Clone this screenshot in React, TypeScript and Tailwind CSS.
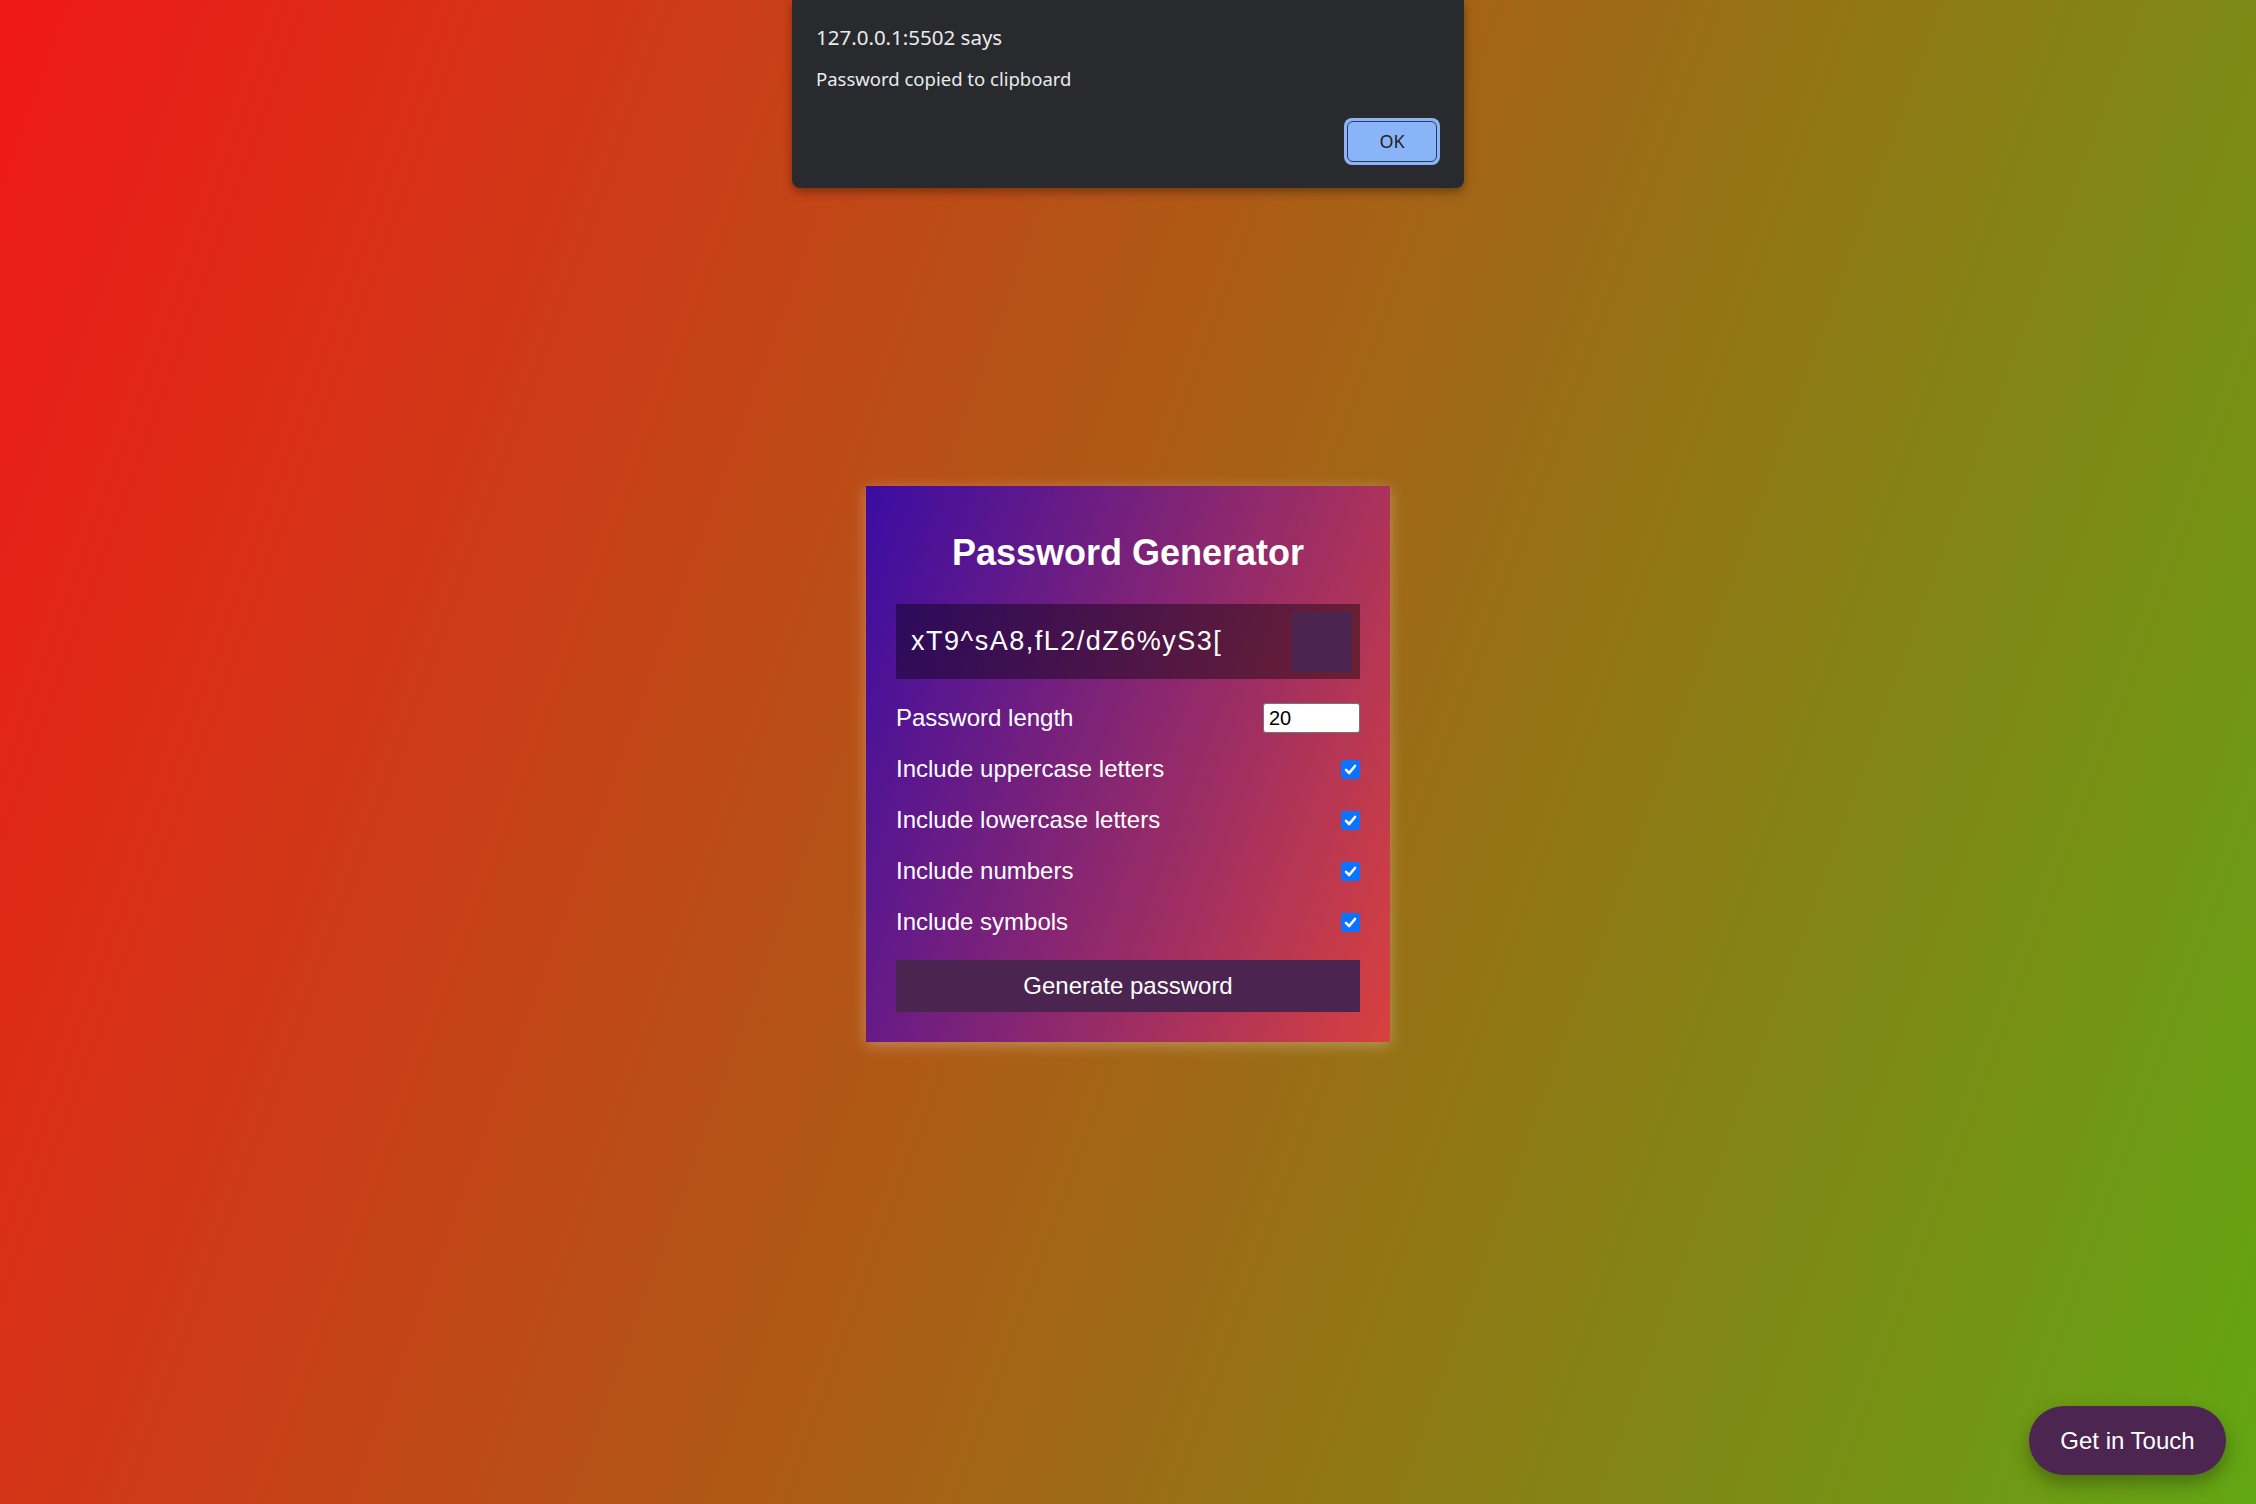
import React from 'react'

const options = [
  'Include uppercase letters',
  'Include lowercase letters',
  'Include numbers',
  'Include symbols',
]

const Check: React.FC = () => (
  <span className="flex h-[19px] w-[19px] items-center justify-center rounded-[3px] bg-[#0b73ff]">
    <svg width="13" height="13" viewBox="0 0 13 13" fill="none">
      <path d="M2 6.8 L5.2 10 L11 3" stroke="#fff" strokeWidth="2.6" strokeLinecap="round" strokeLinejoin="round" />
    </svg>
  </span>
)

const App: React.FC = () => {
  return (
    <div className="relative h-screen w-full overflow-hidden bg-[linear-gradient(110deg,#f01818,#62a614)] font-['Liberation_Sans',Arial,sans-serif]">
      {/* browser alert */}
      <div className="absolute left-1/2 top-0 z-10 w-[672px] -translate-x-1/2 rounded-b-[8px] bg-[#292a2d] px-[24px] pb-[23px] pt-[23px] text-[#e8eaed] shadow-[0_4px_10px_rgba(0,0,0,0.35)] font-['Noto_Sans','Open_Sans',sans-serif]">
        <p className="text-[20.5px] leading-[28px]">127.0.0.1:5502 says</p>
        <p className="mt-[16px] text-[18.5px] leading-[24px]">Password copied to clipboard</p>
        <div className="mt-[27px] flex justify-end">
          <div className="rounded-[8px] bg-[#8ab4f8] p-[3px]">
            <button className="flex h-[41px] w-[90px] items-center justify-center rounded-[6px] border-[1.5px] border-[#2f3b52] bg-[#8ab4f8] text-[18px] text-[#202124]">
              OK
            </button>
          </div>
        </div>
      </div>

      <div className="flex h-full w-full items-center justify-center pt-[24px]">
        <div className="w-[524px] bg-[linear-gradient(110deg,#3a0ca3,#d8413e)] px-[30px] pb-[30px] pt-[46px] text-white shadow-[0_3px_14px_rgba(255,255,255,0.3)]">
          <h2 className="text-center text-[36px] font-bold leading-[41px]">Password Generator</h2>

          <div className="mt-[31px] flex h-[75px] items-center justify-between bg-black/40 pl-[15px] pr-[8px]">
            <span className="text-[27px] tracking-[1.5px]">xT9^sA8,fL2/dZ6%yS3[</span>
            <button className="h-[60px] w-[60px] bg-[#4b2450]" aria-label="copy" />
          </div>

          <div className="mt-[24px] flex flex-col gap-[21px]">
            <div className="flex h-[30px] items-center justify-between">
              <span className="text-[24px]">Password length</span>
              <input
                type="text"
                defaultValue="20"
                className="h-[30px] w-[97px] rounded-[3px] border border-[#767676] bg-white px-[5px] text-[20px] text-black"
              />
            </div>
            {options.map((label) => (
              <div key={label} className="flex h-[30px] items-center justify-between">
                <span className="text-[24px]">{label}</span>
                <Check />
              </div>
            ))}
          </div>

          <button className="mt-[23px] flex h-[52px] w-full items-center justify-center bg-[#4b2450] text-[24px] text-white">
            Generate password
          </button>
        </div>
      </div>

      <button className="absolute bottom-[29px] right-[30px] flex h-[69px] w-[197px] items-center justify-center rounded-full bg-[#4c2550] text-[24px] text-white shadow-[0_8px_18px_rgba(0,0,0,0.3)]">
        Get in Touch
      </button>
    </div>
  )
}

export default App
